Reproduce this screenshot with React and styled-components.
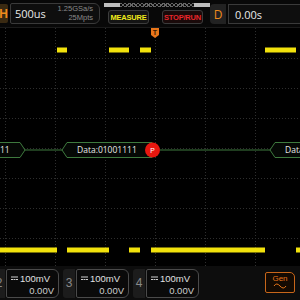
import React from "react";
import styled, { createGlobalStyle } from "styled-components";

const Global = createGlobalStyle`
  html, body { margin: 0; padding: 0; background: #000; }
  body { font-family: "Liberation Sans", Arial, sans-serif; }
`;

const Root = styled.div`
  width: 300px;
  height: 300px;
  background: #000;
  display: flex;
  flex-direction: column;
  overflow: hidden;
  position: relative;
`;

const TopBar = styled.div`
  height: 28px;
  display: flex;
  align-items: stretch;
  background: #080808;
  border-bottom: 1px solid #1a1a1a;
  box-sizing: border-box;
`;

const HBadge = styled.div`
  width: 8px;
  margin: 4px 0 4px 0;
  background: #3a2a12;
  color: #f08a1c;
  font-size: 12px;
  font-weight: bold;
  display: flex;
  align-items: center;
  justify-content: flex-end;
  overflow: hidden;
  border-radius: 0 2px 2px 0;
`;

const TimeBox = styled.div`
  width: 90px;
  margin: 3px 0 3px 2px;
  border: 1px solid #3a3a3a;
  border-radius: 2px 6px 6px 2px;
  background: #0e0e0e;
  display: flex;
  align-items: center;
  justify-content: space-between;
  padding: 0 6px 0 4px;
  box-sizing: border-box;
`;

const BigValue = styled.span`
  color: #e8e8e8;
  font-family: "Open Sans", sans-serif;
  font-size: 11px;
`;

const SmallStack = styled.div`
  display: flex;
  flex-direction: column;
  align-items: flex-end;
  color: #8a8a8a;
  font-size: 7.5px;
  line-height: 8.5px;
`;

const Middle = styled.div`
  width: 106px;
  margin-left: 4px;
  display: flex;
  flex-direction: column;
`;

const MemBar = styled.div`
  height: 4px;
  margin-top: 3px;
  display: flex;
`;

const MemSolid = styled.div`
  width: ${(p) => p.w}px;
  background: #bdbdbd;
`;

const MemWave = styled.div`
  flex: 1;
  background: repeating-linear-gradient(45deg, #666 0 1px, transparent 1px 3px),
    repeating-linear-gradient(-45deg, #666 0 1px, transparent 1px 3px);
`;

const ButtonRow = styled.div`
  display: flex;
  gap: 13px;
  margin-top: 3px;
  padding-left: 4px;
`;

const Btn = styled.div`
  width: 41px;
  height: 14px;
  border: 1px solid #3c3c3c;
  border-radius: 3px;
  background: ${(p) => p.bg};
  color: ${(p) => p.fg};
  font-size: 7.5px;
  font-weight: bold;
  display: flex;
  align-items: center;
  justify-content: center;
  box-sizing: border-box;
  letter-spacing: -0.2px;
`;

const DBox = styled.div`
  flex: 1;
  margin: 4px 0 3px 0;
  display: flex;
`;

const DLetter = styled.div`
  width: 16px;
  background: #222;
  color: #f08a1c;
  font-family: "Open Sans", sans-serif;
  font-size: 12px;
  display: flex;
  align-items: center;
  justify-content: center;
  border-radius: 4px 0 0 4px;
`;

const DValue = styled.div`
  flex: 1;
  margin-left: 2px;
  background: #0e0e0e;
  border: 1px solid #3a3a3a;
  border-right: none;
  color: #e8e8e8;
  font-family: "Open Sans", sans-serif;
  font-size: 11px;
  display: flex;
  align-items: center;
  padding-left: 6px;
`;

const Screen = styled.div`
  flex: 1;
  position: relative;
`;

const TriggerMark = styled.div`
  position: absolute;
  left: 151px;
  top: 0px;
  width: 8px;
  height: 10px;
  background: #e8761a;
  clip-path: polygon(0 0, 100% 0, 100% 70%, 50% 100%, 0 70%);
  color: #3a1a00;
  font-size: 7px;
  font-weight: bold;
  display: flex;
  justify-content: center;
  line-height: 9px;
`;

const BottomBar = styled.div`
  height: 34px;
  background: #0d0d0d;
  display: flex;
  align-items: center;
  position: relative;
`;

const ChannelRow = styled.div`
  display: flex;
  margin-left: -7px;
  gap: 4px;
  height: 29px;
`;

const Channel = styled.div`
  display: flex;
  gap: 1px;
`;

const ChLabel = styled.div`
  width: 12px;
  background: #1c1c1c;
  color: #8a8a8a;
  font-family: "Liberation Sans", sans-serif;
  font-size: 12px;
  line-height: 13px;
  display: flex;
  align-items: center;
  justify-content: center;
  border-radius: 3px 0 0 3px;
`;

const ChBox = styled.div`
  width: 53px;
  border: 1px solid #4a4a4a;
  border-radius: 2px 6px 6px 2px;
  background: #0a0a0a;
  box-sizing: border-box;
  padding: 3px 4px 0 4px;
  display: flex;
  flex-direction: column;
  gap: 1px;
  color: #e0e0e0;
  font-family: "Liberation Sans", sans-serif;
  font-size: 9.5px;
  line-height: 11px;
`;

const ScaleLine = styled.div`
  display: flex;
  align-items: center;
  gap: 2px;
  height: 11px;
`;

const Offset = styled.div`
  text-align: right;
  color: #cfcfcf;
  height: 11px;
`;

const GenBtn = styled.div`
  position: absolute;
  left: 265px;
  top: 6px;
  width: 30px;
  height: 21px;
  border: 1px solid #c8661a;
  border-radius: 2px 5px 2px 2px;
  background: #140a02;
  box-sizing: border-box;
  color: #e8761a;
  font-size: 8px;
  display: flex;
  flex-direction: column;
  align-items: center;
  padding-top: 1px;
  line-height: 9px;
`;

const DcIcon = () => (
  <svg width="7" height="5" viewBox="0 0 7 5">
    <rect x="0" y="0.5" width="7" height="1" fill="#ccc" />
    <rect x="0" y="3" width="2" height="1" fill="#ccc" />
    <rect x="2.5" y="3" width="2" height="1" fill="#ccc" />
    <rect x="5" y="3" width="2" height="1" fill="#ccc" />
  </svg>
);

const high = [
  [57, 67],
  [109, 129],
  [140, 151],
  [265, 296],
];
const low = [
  [0, 57],
  [67, 109],
  [129, 140],
  [151, 265],
  [296, 300],
];

const Waveform = () => {
  const vx = [5, 55, 105, 155, 205, 255];
  const hy = [30, 60, 90, 120, 150, 180, 210];
  const top = 22;
  const bot = 222;
  const by = 122;
  const bh = 7.5;
  return (
    <svg width="300" height="238" viewBox="0 0 300 238" style={{ display: "block" }}>
      {vx.map((x) => (
        <line key={"v" + x} x1={x + 0.5} y1="0" x2={x + 0.5} y2="238" stroke="#2e2e2e" strokeWidth="1" strokeDasharray="1 2" />
      ))}
      {hy.map((y) => (
        <line key={"h" + y} x1="0" y1={y + 0.5} x2="300" y2={y + 0.5} stroke="#2e2e2e" strokeWidth="1" strokeDasharray="1 2" />
      ))}
      {high.map(([a, b]) => (
        <rect key={"hi" + a} x={a} y={top - 2.5} width={b - a} height="5" fill="#f2e20c" />
      ))}
      {low.map(([a, b]) => (
        <rect key={"lo" + a} x={a} y={bot - 2.5} width={b - a} height="5" fill="#f2e20c" />
      ))}
      <g stroke="#3e7a3e" strokeWidth="1" fill="#050805">
        <polygon points={`-10,${by - bh} 20,${by - bh} 25,${by} 20,${by + bh} -10,${by + bh}`} />
        <line x1="25" y1={by} x2="62" y2={by} />
        <polygon points={`62,${by} 67,${by - bh} 152,${by - bh} 152,${by + bh} 67,${by + bh}`} />
        <line x1="160" y1={by} x2="270" y2={by} />
        <polygon points={`270,${by} 275,${by - bh} 310,${by - bh} 310,${by + bh} 275,${by + bh}`} />
      </g>
      <g fill="#e8e8e8" fontFamily="'Open Sans', sans-serif" fontSize="8.5">
        <text x="0" y={by + 3}>11</text>
        <text x="77" y={by + 3}>Data:01001111</text>
        <text x="285" y={by + 3}>Data:01001111</text>
      </g>
      <circle cx="152.5" cy={by} r="7.5" fill="#e8170f" />
      <text x="152.5" y={by + 3} fill="#fff" fontFamily="'Open Sans', sans-serif" fontSize="8" textAnchor="middle">P</text>
    </svg>
  );
};

const channels = ["2", "3", "4"];

export default function App() {
  return (
    <Root>
      <Global />
      <TopBar>
        <HBadge>H</HBadge>
        <TimeBox>
          <BigValue>500us</BigValue>
          <SmallStack>
            <span>1.25GSa/s</span>
            <span>25Mpts</span>
          </SmallStack>
        </TimeBox>
        <Middle>
          <MemBar>
            <MemSolid w={16} />
            <MemWave />
            <MemSolid w={16} />
          </MemBar>
          <ButtonRow>
            <Btn bg="#141414" fg="#f0ec1a">MEASURE</Btn>
            <Btn bg="#1a0a0a" fg="#e8262a">STOP/RUN</Btn>
          </ButtonRow>
        </Middle>
        <DBox>
          <DLetter>D</DLetter>
          <DValue>0.00s</DValue>
        </DBox>
      </TopBar>
      <Screen>
        <Waveform />
        <TriggerMark>T</TriggerMark>
      </Screen>
      <BottomBar>
        <ChannelRow>
          {channels.map((c) => (
            <Channel key={c}>
              <ChLabel>{c}</ChLabel>
              <ChBox>
                <ScaleLine>
                  <DcIcon />
                  <span>100mV</span>
                </ScaleLine>
                <Offset>0.00V</Offset>
              </ChBox>
            </Channel>
          ))}
        </ChannelRow>
        <GenBtn>
          <span>Gen</span>
          <svg width="14" height="6" viewBox="0 0 14 6">
            <path d="M1 3 Q3.5 -1 7 3 T13 3" fill="none" stroke="#e8761a" strokeWidth="1" />
          </svg>
        </GenBtn>
      </BottomBar>
    </Root>
  );
}
